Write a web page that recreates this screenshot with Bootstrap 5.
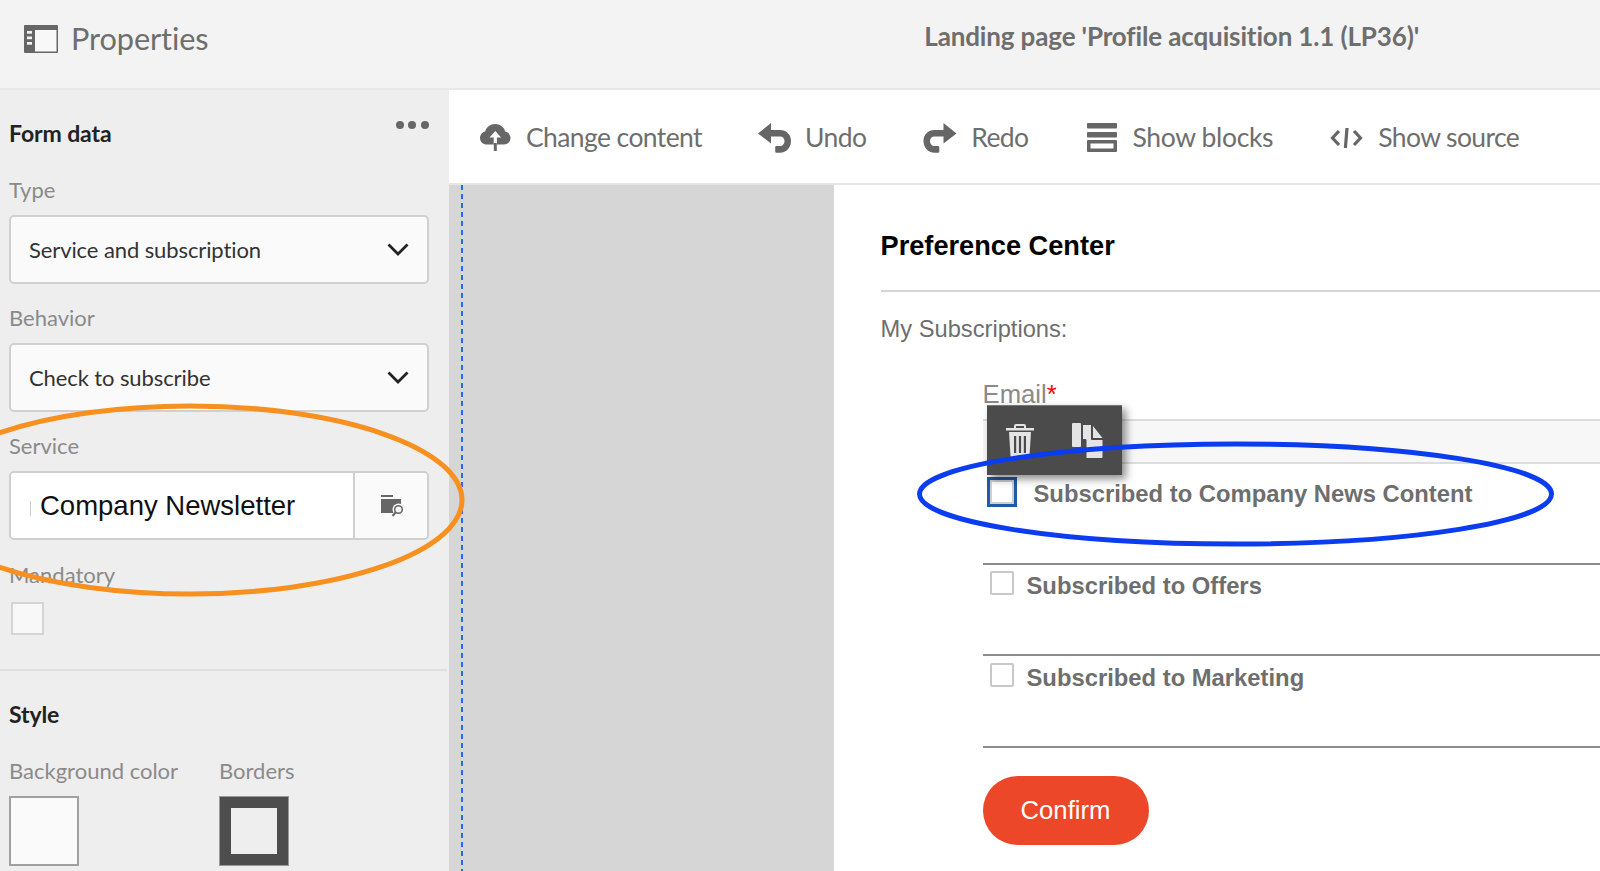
<!DOCTYPE html>
<html lang="en">
<head>
<meta charset="utf-8">
<title>Properties</title>
<link href="https://cdn.jsdelivr.net/npm/bootstrap@5.3.0/dist/css/bootstrap.min.css" rel="stylesheet">
<style>
html,body{height:871px;overflow:hidden;background:#fff}
body{font-family:Lato,"Open Sans",sans-serif;color:#6e6e6e;position:relative}
.topbar{height:90px;background:#f3f3f3;border-bottom:2px solid #e8e8e8;padding:0 0 11px 24px}
.topname{font-size:30.7px;margin-left:13px;letter-spacing:-.1px;color:#6e6e6e;position:relative;top:1px}
.lptitle{position:relative;margin-left:auto;margin-right:181px;font-size:26px;font-weight:700;letter-spacing:-.14px;color:#6e6e6e;top:-2px}
.sidepanel{width:449px;height:781px;background:#eee;padding:28px 0 0 0;flex:none;overflow:hidden}
.sideinner{padding:0 20.500px 0 9px}
.sidehead{height:30px;line-height:30px;font-size:23px;font-weight:700;color:#222;letter-spacing:-.1px}
.headgap{margin-bottom:27px}
.dots{display:flex;gap:4.500px;margin-top:3px}
.dots i{display:block;width:8px;height:8px;border-radius:50%;background:#666}
.fieldlbl{height:30px;line-height:30px;font-size:22px;color:#8a8a8a;margin-bottom:10px}
.fieldsel{height:69px;border:2px solid #d0d0d0;border-radius:5px;background:#fafafa;padding:0 18px 0 18px;font-size:22px;letter-spacing:-.1px;color:#333;margin-bottom:19px}
.fieldsvc{height:69px;border:2px solid #cfcfcf;border-radius:5px;overflow:hidden;margin-bottom:20px}
.svcval{flex:1;background:#fff;font-family:"Liberation Sans",Arial,sans-serif;font-size:27.5px;color:#111;padding:0 0 0 29px;position:relative}
.svccaret{position:absolute;left:19px;top:28px;width:1px;height:15px;background:#ccc}
.svcbtn{width:74px;background:#fafafa;border-left:2px solid #cfcfcf;padding-left:4px}
.mandbox{width:33px;height:33px;border:2px solid #d4d4d4;background:#f8f8f8;margin:12px 0 34px 2px}
.paneldiv{height:2px;background:#dfdfdf;margin:0 2px 28px 0}
.swatchlbl{height:30px;line-height:30px;font-size:22px;color:#8a8a8a;margin:27px 0 10px}
.swatchcol{width:210px}
.swatchw{width:70px;height:70px;background:#fafafa;border:2px solid #a0a0a0}
.swatchb{width:70px;height:70px;background:#eee;border:12px solid #4d4d4d;outline:1px solid #999;outline-offset:-1px}
.toolstrip{height:95px;background:#fff;border-bottom:2px solid #e6e6e6;padding:2px 0 0 31px;font-size:26.5px;letter-spacing:-.6px;color:#6e6e6e}
.toolact{gap:15px}
.toolundo{gap:14px;margin-left:56px}
.toolredo{gap:14px;margin-left:57px}
.toolblocks{gap:16px;margin-left:58px;letter-spacing:-.35px}
.toolsource{gap:15px;margin-left:57px}
.gutter{width:385px;height:686px;background:#d6d6d6;padding-left:12px;flex:none}
.dashline{width:2px;height:100%;background:repeating-linear-gradient(to bottom,#2b66f2 0,#2b66f2 5px,transparent 5px,transparent 9px)}
.pagecol{flex:1;height:686px;background:#fff;padding:45px 0 0 46.500px;font-family:"Liberation Sans",Arial,sans-serif}
.pctitle{font-size:27.2px;line-height:32px;font-weight:700;color:#000}
.pcrule{height:2px;background:#d4d4d4;margin:28px 0 22px}
.pcsub{font-size:23.7px;line-height:30px;color:#6e6e6e}
.formblk{margin:35px 0 0 102px;position:relative}
.emaillbl{font-size:25.7px;line-height:30px;color:#8a8a8a;margin-bottom:10px}
.emaillbl b{color:#f00;font-weight:400}
.emailbox{height:45px;background:#f7f7f7;border-top:2px solid #ddd;border-bottom:2px solid #ddd}
.subrow{border-bottom:2px solid #8c8c8c;font-size:23.8px;line-height:30px;font-weight:700;color:#6e6e6e}
.subrow1{height:101px;padding:13px 0 0 4px;gap:17px}
.subrow2{height:91px;padding:6px 0 0 7px;gap:13px}
.subrow3{height:92px;padding:7px 0 0 7px;gap:13px}
.subrow1 .txt{margin-top:2px}
.subcheck{width:24px;height:24px;flex:none;border:2px solid #c8c8c8;border-radius:2px;background:#fff}
.subfocus{width:30px;height:30px;flex:none;border:3px solid #1f5ba8;background:#fff;box-shadow:inset 0 0 0 2px #cfcfcf}
.confirmbtn{width:166px;height:69px;margin-top:28px;background:#ec4729;color:#fff;border:0;border-radius:35px;font-size:25.7px;display:flex;align-items:center;justify-content:center}
.floatbar{position:absolute;left:4px;top:26px;width:135px;height:70px;background:#4b4b4b;box-shadow:4px 4px 8px rgba(0,0,0,.45);border-top:1px solid #777}
.floatbar svg{position:absolute}
.floatbar .ft{left:19px;top:18px}
.floatbar .fc{left:85px;top:17px}
.annot{position:absolute;left:0;top:0;pointer-events:none}
</style>
</head>
<body>
<header class="topbar d-flex align-items-center">
  <svg width="34" height="28" viewBox="0 0 34 28"><path fill="#666" d="M1 0h32a1 1 0 0 1 1 1v26a1 1 0 0 1-1 1H1a1 1 0 0 1-1-1V1a1 1 0 0 1 1-1z"/><rect x="11" y="5" width="21.500" height="21.500" fill="#f8f8f8"/><rect x="3" y="6" width="5" height="2.700" fill="#f3f3f3"/><rect x="3" y="11.500" width="5" height="2.700" fill="#f3f3f3"/><rect x="3" y="17" width="5" height="2.700" fill="#f3f3f3"/></svg>
  <span class="topname">Properties</span>
  <span class="lptitle">Landing page 'Profile acquisition 1.1 (LP36)'</span>
</header>
<main class="d-flex">
  <aside class="sidepanel">
    <div class="sideinner">
      <div class="d-flex justify-content-between align-items-start sidehead headgap"><span>Form data</span><span class="dots"><i></i><i></i><i></i></span></div>
      <div class="fieldlbl">Type</div>
      <div class="fieldsel d-flex align-items-center justify-content-between"><span>Service and subscription</span><svg width="22" height="13" viewBox="0 0 22 13"><path d="M1.500 1.500 11 11l9.500-9.500" fill="none" stroke="#222" stroke-width="2.800"/></svg></div>
      <div class="fieldlbl">Behavior</div>
      <div class="fieldsel d-flex align-items-center justify-content-between"><span>Check to subscribe</span><svg width="22" height="13" viewBox="0 0 22 13"><path d="M1.500 1.500 11 11l9.500-9.500" fill="none" stroke="#222" stroke-width="2.800"/></svg></div>
      <div class="fieldlbl">Service</div>
      <div class="fieldsvc d-flex">
        <div class="svcval d-flex align-items-center"><span class="svccaret"></span><span>Company Newsletter</span></div>
        <div class="svcbtn d-flex align-items-center justify-content-center"><svg width="24" height="22" viewBox="0 0 24 22"><rect width="12" height="2" fill="#666"/><rect y="4" width="20" height="14" fill="#666"/><circle cx="17.500" cy="14.500" r="6" fill="#fafafa"/><circle cx="17.500" cy="14.500" r="3.800" fill="none" stroke="#666" stroke-width="1.600"/><path d="M14.700 17.300 11.500 21" stroke="#666" stroke-width="2"/></svg></div>
      </div>
      <div class="fieldlbl mb-0">Mandatory</div>
      <div class="mandbox"></div>
    </div>
    <div class="paneldiv"></div>
    <div class="sideinner">
      <div class="sidehead">Style</div>
      <div class="d-flex">
        <div class="swatchcol"><div class="swatchlbl">Background color</div><div class="swatchw"></div></div>
        <div><div class="swatchlbl">Borders</div><div class="swatchb"></div></div>
      </div>
    </div>
  </aside>
  <section class="flex-grow-1">
    <nav class="toolstrip d-flex align-items-center">
      <div class="toolact d-flex align-items-center">
        <svg width="31" height="27" viewBox="0 0 31 27"><path fill="#666" d="M7 20.500C3 20.500 0 17.800 0 14c0-3.200 2.200-5.800 5.200-6.400C6.200 3.200 10.300 0 15.200 0c4.900 0 9 3.200 10 7.600 3 .6 5.300 3.200 5.300 6.400 0 3.800-3 6.500-7 6.500z"/><path fill="#fff" d="M15.300 7 9.500 13.500h4.200V20.500h3.200v-7h4.200z"/><rect x="13.800" y="19" width="3" height="8" fill="#666"/></svg>
        <span>Change content</span>
      </div>
      <div class="toolundo d-flex align-items-center">
        <svg width="33" height="30" viewBox="0 0 33 30"><path fill="#666" d="M13 0v7h9c6.500 0 11 4.700 11 11 0 6.300-4.500 11.700-11 11.700h-3.500a1.300 1.300 0 0 1-1.300-1.300v-4a1.300 1.300 0 0 1 1.300-1.300H22c2.700 0 4.500-2.500 4.500-5.100 0-2.600-1.800-4.600-4.500-4.600h-9v7L0 10.500z"/></svg>
        <span>Undo</span>
      </div>
      <div class="toolredo d-flex align-items-center">
        <svg width="34" height="30" viewBox="0 0 33 30"><path fill="#666" d="M20 0v7h-9C4.500 7 0 11.700 0 18c0 6.300 4.500 11.700 11 11.700h3.500a1.300 1.300 0 0 0 1.300-1.300v-4a1.300 1.300 0 0 0-1.300-1.300H11c-2.700 0-4.500-2.500-4.500-5.100 0-2.600 1.800-4.600 4.500-4.600h9v7l13-9.900z"/></svg>
        <span>Redo</span>
      </div>
      <div class="toolblocks d-flex align-items-center">
        <svg width="30" height="29" viewBox="0 0 30 29"><rect width="30" height="5.500" rx="1" fill="#666"/><rect y="9" width="30" height="5.500" rx="1" fill="#666"/><rect y="17" width="30" height="12" rx="1" fill="#666"/><rect x="3.500" y="20.500" width="23" height="5" fill="#fff"/></svg>
        <span>Show blocks</span>
      </div>
      <div class="toolsource d-flex align-items-center">
        <svg width="33" height="20" viewBox="0 0 33 20"><path d="M9 3 2.500 10 9 17M24 3l6.500 7L24 17" fill="none" stroke="#666" stroke-width="3.200"/><path d="M18.600 0 17 20h-3.200L15.400 0z" fill="#666"/></svg>
        <span>Show source</span>
      </div>
    </nav>
    <div class="d-flex">
      <div class="gutter"><div class="dashline"></div></div>
      <div class="pagecol">
        <div class="pctitle">Preference Center</div>
        <div class="pcrule"></div>
        <div class="pcsub">My Subscriptions:</div>
        <div class="formblk">
          <div class="emaillbl">Email<b>*</b></div>
          <div class="emailbox"></div>
          <div class="subrow subrow1 d-flex align-items-start"><span class="subfocus"></span><span class="txt">Subscribed to Company News Content</span></div>
          <div class="subrow subrow2 d-flex align-items-start"><span class="subcheck"></span><span>Subscribed to Offers</span></div>
          <div class="subrow subrow3 d-flex align-items-start"><span class="subcheck"></span><span>Subscribed to Marketing</span></div>
          <button type="button" class="btn confirmbtn">Confirm</button>
          <div class="floatbar">
            <svg class="ft" width="28" height="34" viewBox="0 0 28 34"><path fill="#e4e4e4" d="M10 0h8a2 2 0 0 1 2 2v2h8v2.500H0V4h8V2a2 2 0 0 1 2-2zm0 2v2h8V2z"/><path fill="#e4e4e4" d="M3 8h22l-1.500 24a2 2 0 0 1-2 2h-15a2 2 0 0 1-2-2z"/><g fill="#4b4b4b"><rect x="8" y="12" width="2.200" height="17"/><rect x="12.900" y="12" width="2.200" height="17"/><rect x="17.800" y="12" width="2.200" height="17"/></g></svg>
            <svg class="fc" width="31" height="35" viewBox="0 0 31 35"><path fill="#e4e4e4" d="M1 0h7a1 1 0 0 1 1 1v22a1 1 0 0 1-1 1H1a1 1 0 0 1-1-1V1a1 1 0 0 1 1-1z"/><path fill="#e4e4e4" d="M11 2v14h2c1 0 1.500.5 1.500 1.500V35h15a1 1 0 0 0 1-1V17H20a1 1 0 0 1-1-1V2z"/><path fill="#e4e4e4" d="M21 3l9.500 12H21z"/></svg>
          </div>
        </div>
      </div>
    </div>
  </section>
</main>
<svg class="annot" width="1600" height="871" viewBox="0 0 1600 871" aria-hidden="true">
  <ellipse cx="190" cy="500" rx="272" ry="94" fill="none" stroke="#f7901e" stroke-width="5"/>
  <ellipse cx="1235.500" cy="494" rx="316" ry="50" fill="none" stroke="#0b3cf0" stroke-width="5"/>
</svg>
</body>
</html>
